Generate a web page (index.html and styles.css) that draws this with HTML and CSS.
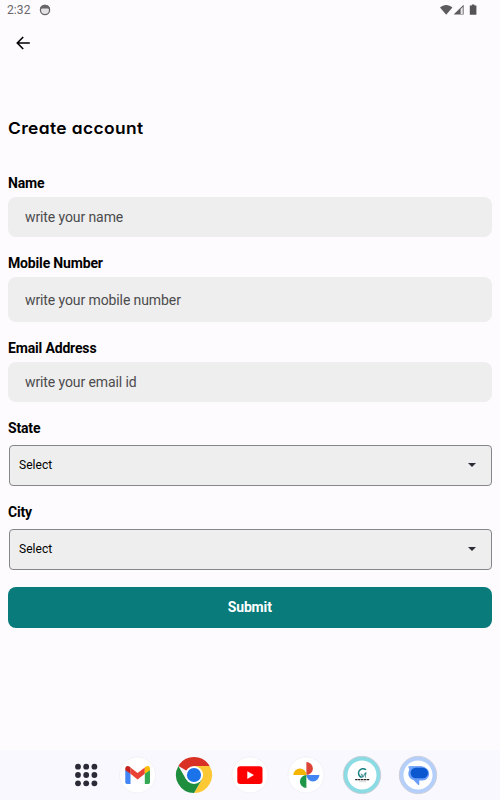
FILE: index.html
```html
<!DOCTYPE html>
<html lang="en">
<head>
    <meta charset="utf-8">
    <title>Create account</title>
    <link rel="stylesheet" href="styles.css">
</head>
<body>
    <div class="screen">
        <div class="status-bar">
            <span class="time">2:32</span>
            <svg class="notice" width="12" height="12" viewBox="0 0 12 12">
                <circle cx="6" cy="6" r="4.6" fill="#e4e1e4" stroke="#69666a" stroke-width="1.3"/>
                <path d="M.9 5.4C1.1 2.2 3 .7 6 .7s4.9 1.5 5.1 4.7L9 4.6H3z" fill="#69666a"/>
            </svg>
            <svg class="signals" width="38" height="12" viewBox="0 0 38 12">
                <path d="M0 3.6C3.6.2 8.8.2 12.4 3.6L6.2 10.8z" fill="#5d5b5e"/>
                <path d="M13.6 10.6L23.6.8v9.8z" fill="#5d5b5e"/>
                <path d="M20.6 5v5h2.2V3z" fill="#e8e4e8"/>
                <path d="M31.8.4h2.6v1h2v9.4h-6.6V1.4h2z" fill="#555356"/>
            </svg>
        </div>
        <div class="app-bar">
            <svg width="14" height="14" viewBox="0 0 14 14">
                <path d="M13.8 7H1.5M7.2 1L1.300 7l5.900 6" fill="none" stroke="#000" stroke-width="1.6"/>
            </svg>
        </div>

        <form class="form">
            <h1>Create account</h1>
            <label for="name">Name</label>
            <input id="name" class="field" type="text" placeholder="write your name">
            <label for="mobile">Mobile Number</label>
            <input id="mobile" class="field tall" type="text" placeholder="write your mobile number">
            <label for="email">Email Address</label>
            <input id="email" class="field" type="text" placeholder="write your email id">
            <label class="state-label">State</label>
            <div class="select">
                <span>Select</span>
                <svg width="8" height="4" viewBox="0 0 8 4"><path d="M0 0h8L4 4z" fill="#2d2b38"/></svg>
            </div>
            <label class="city-label">City</label>
            <div class="select">
                <span>Select</span>
                <svg width="8" height="4" viewBox="0 0 8 4"><path d="M0 0h8L4 4z" fill="#2d2b38"/></svg>
            </div>
            <button class="submit" type="button">Submit</button>
        </form>

        <div class="dock">
            <svg class="apps" width="24" height="24" viewBox="0 0 24 24" fill="#2b2b38">
                <circle cx="4" cy="3.7" r="2.9"/><circle cx="12.2" cy="3.7" r="2.9"/><circle cx="20.4" cy="3.7" r="2.9"/>
                <circle cx="4" cy="12" r="2.9"/><circle cx="12.2" cy="12" r="2.9"/><circle cx="20.4" cy="12" r="2.9"/>
                <circle cx="4" cy="20.3" r="2.9"/><circle cx="12.2" cy="20.3" r="2.9"/><circle cx="20.4" cy="20.3" r="2.9"/>
            </svg>
            <!-- mail -->
            <svg width="40" height="40" viewBox="0 0 40 40">
                <circle cx="19.5" cy="20" r="18" fill="#fff" stroke="#f1eff5" stroke-width=".9"/>
                <path d="M7.3 14.5l5.2 4V29H9.1Q7.3 29 7.3 27.2z" fill="#4285f4"/>
                <path d="M26.8 18.5l5.2-4v12.7q0 1.8-1.8 1.8h-3.4z" fill="#34a853"/>
                <path d="M12.5 12.5l7.1 5.5 7.2-5.5v6.3l-7.2 5.6-7.1-5.6z" fill="#ea4335"/>
                <path d="M7.3 15.3V13.4c0-2.5 2.5-3.2 4.2-1.8l1 .9v6.3z" fill="#c5221f"/>
                <path d="M32 15.3V13.4c0-2.5-2.5-3.2-4.2-1.8l-1 .9v6.3z" fill="#fbbc04"/>
            </svg>
            <!-- browser -->
            <svg width="40" height="40" viewBox="0 0 40 40">
                <path d="M20 20L4.41 11A18 18 0 0 1 35.59 11z" fill="#d93025"/>
                <path d="M20 11H35.59A18 18 0 0 1 20 38L27.8 24.5z" fill="#fcc934"/>
                <path d="M27.8 24.5L20 38A18 18 0 0 1 4.41 11L12.2 24.5z" fill="#1e8e3e"/>
                <circle cx="20" cy="20" r="9" fill="#fff"/>
                <circle cx="20" cy="20" r="7.1" fill="#1a73e8"/>
            </svg>
            <!-- video -->
            <svg width="40" height="40" viewBox="0 0 40 40">
                <circle cx="20" cy="20" r="18" fill="#fff" stroke="#f1eff5" stroke-width=".9"/>
                <rect x="7.3" y="11.2" width="25.2" height="17.8" rx="3" fill="#f00"/>
                <path d="M17.3 16.2v7.8l6.6-3.9z" fill="#fff"/>
            </svg>
            <!-- photos -->
            <svg width="40" height="40" viewBox="0 0 40 40">
                <circle cx="20" cy="20" r="18" fill="#fff" stroke="#f1eff5" stroke-width=".9"/>
                <path d="M20.4 20V7a6.5 6.5 0 0 1 0 13z" fill="#db4437"/>
                <path d="M20.4 20h13a6.5 6.5 0 0 1-13 0z" fill="#4285f4"/>
                <path d="M20.4 20v13a6.5 6.5 0 0 1 0-13z" fill="#1e9648"/>
                <path d="M20.4 20h-13a6.5 6.5 0 0 1 13 0z" fill="#f4b400"/>
            </svg>
            <!-- this app -->
            <svg width="40" height="40" viewBox="0 0 40 40">
                <circle cx="20" cy="20" r="18.7" fill="#8adbe3" stroke="#c9d0d8" stroke-width="1"/>
                <circle cx="20" cy="20" r="14.5" fill="#fff"/>
                <path d="M24 14.8a4.500 4.500 0 1 0-4.200 7.700" fill="none" stroke="#16807f" stroke-width="1.500"/>
                <path d="M19 18.600l1.800 3.600 3.400-5M20.800 22.400v-3.200M22.200 18.800h2.400M23.400 17.600v5.200" fill="none" stroke="#247d82" stroke-width=".8"/>
                <path d="M13.200 24.600h14.200" stroke="#222" stroke-width="1.300" stroke-dasharray="2.400 .5"/>
                <path d="M17 26.700h7" stroke="#bbb" stroke-width=".6"/>
            </svg>
            <!-- messages -->
            <svg width="40" height="40" viewBox="0 0 40 40">
                <circle cx="20" cy="20" r="18.700" fill="#b5cffb" stroke="#cdd0da" stroke-width="1"/>
                <circle cx="20" cy="20" r="14.500" fill="#fff"/>
                <path d="M12 11h11a5.500 5.500 0 0 1 5.500 5.500v3.500a5 5 0 0 1-5 5h-6a6 6 0 0 1-6-6v-3q0-1.800-1.100-3.500Q9.800 11 12 11z" fill="#7baaf7"/>
                <path d="M17.500 12h7a6.500 6.500 0 0 1 0 13.400h-3.200v3.800q-.2 1.500-1.300.5l-4.600-4.700a6.600 6.600 0 0 1 2.100-13z" fill="#6a9df8"/>
                <rect x="12.600" y="12.800" width="17.400" height="10.400" rx="5.200" fill="#0b57d0"/>
            </svg>
        </div>
    </div>
</body>
</html>
```
FILE: styles.css
```css
* {
    box-sizing: border-box;
}
body {
    margin: 0;
    background-color: #fefbff;
    font-family: Roboto, "Liberation Sans", sans-serif;
    color: #000;
}
.screen {
    width: 500px;
    height: 800px;
    display: flex;
    flex-direction: column;
}
.status-bar {
    height: 20px;
    padding: 0 22px 0 7px;
    display: flex;
    align-items: center;
    color: #69666a;
    font-size: 12px;
}
.time {
    width: 32px;
    letter-spacing: 0.1px;
}
.signals {
    margin-left: auto;
    margin-top: -1px;
}
.app-bar {
    height: 46px;
    padding: 0 16px;
    display: flex;
    align-items: center;
}
.app-bar svg {
    display: block;
}
.form {
    flex: 1;
    padding: 50px 8.5px 0 8px;
    display: flex;
    flex-direction: column;
}
h1 {
    margin: 0 0 33px;
    font-family: Inter, "Open Sans", sans-serif;
    font-feature-settings: "cv11";
    font-size: 16.5px;
    font-weight: 600;
    line-height: 25px;
    letter-spacing: 0.35px;
    transform: scaleX(1.055);
    transform-origin: left;
}
label {
    height: 18px;
    margin-bottom: 5px;
    font-size: 14px;
    font-weight: 700;
    line-height: 18px;
    letter-spacing: -0.16px;
}
.field {
    height: 40px;
    margin: 0 0 17px;
    padding: 0 17px;
    border: none;
    border-radius: 8px;
    background-color: #eee;
    font-family: inherit;
    font-size: 14px;
    letter-spacing: -0.1px;
}
.field::placeholder {
    color: #4b4b4d;
    opacity: 1;
}
.tall {
    height: 45px;
}
.state-label,
.city-label {
    margin-bottom: 8px;
}
.select {
    height: 41px;
    margin: 0 0 17px 1px;
    padding: 0 15px 2px 9px;
    border: 1px solid #85858b;
    border-radius: 4px;
    background-color: #eee;
    display: flex;
    align-items: center;
    justify-content: space-between;
    font-size: 12px;
    letter-spacing: 0.05px;
}
.submit {
    height: 41px;
    padding: 0 0 1px;
    border: none;
    border-radius: 8px;
    background-color: #087b7a;
    color: #fff;
    font-family: inherit;
    font-size: 14px;
    font-weight: 700;
    letter-spacing: -0.16px;
}
.dock {
    height: 50px;
    padding-left: 74px;
    background-color: #faf8ff;
    display: flex;
    align-items: center;
    gap: 16px;
}
.apps {
    margin-right: 4px;
}
```
